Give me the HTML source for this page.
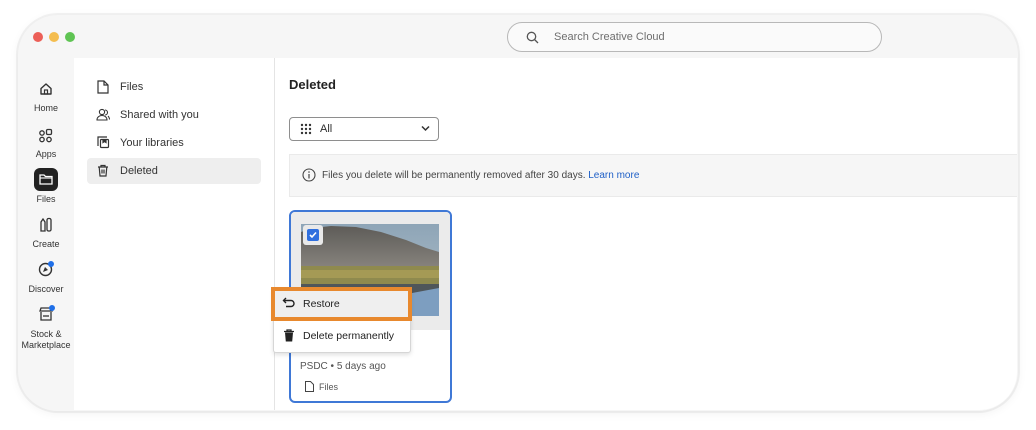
<!DOCTYPE html>
<html><head><meta charset="utf-8"><style>
*{box-sizing:border-box;margin:0;padding:0}
body{width:1036px;height:430px;background:#fff;position:relative;overflow:hidden;font-family:"Liberation Sans",sans-serif;color:#2c2c2c}
.win{position:absolute;left:18px;top:15px;width:1000px;height:396px;background:#f6f6f6;border-radius:40px;box-shadow:0 2px 10px rgba(0,0,0,.06),0 0 0 2px #f3f3f3}
.content{position:absolute;left:74px;top:58px;width:943px;height:352px;background:#fff;border-bottom-right-radius:38px;overflow:hidden}
.dot{position:absolute;top:32px;width:10px;height:10px;border-radius:50%}
.search{position:absolute;left:507px;top:22px;width:375px;height:30px;border:1.5px solid #b8b8b8;border-radius:15px;background:#fafafa;font-size:11px;color:#6e6e6e;padding:8px 0 0 46px}
.nav{position:absolute;left:18px;width:56px;text-align:center;font-size:9px;color:#333}
.side{position:absolute;font-size:11px;color:#333}
.abs{position:absolute}
</style></head><body>
<div class="win"></div>
<div class="dot" style="left:33px;background:#ec5f57"></div>
<div class="dot" style="left:49px;background:#f4bd4f"></div>
<div class="dot" style="left:65px;background:#5fc453"></div>
<div class="search"><svg class="abs" style="left:18px;top:8px" width="13" height="13" viewBox="0 0 13 13"><circle cx="5.5" cy="5.5" r="4.2" fill="none" stroke="#555" stroke-width="1.3"/><path d="M8.5 8.5L12 12" stroke="#555" stroke-width="1.3"/></svg>Search Creative Cloud</div>
<div class="content"></div>
<div class="abs" style="left:274px;top:58px;width:1px;height:352px;background:#e4e4e4"></div>

<svg class="abs" style="left:39px;top:82px" width="14" height="14" viewBox="0 0 14 14"><path d="M2 6.5L7 2l5 4.5V12H2z" fill="none" stroke="#333" stroke-width="1.4" stroke-linejoin="round"/><rect x="5.5" y="8" width="3" height="4" fill="none" stroke="#333" stroke-width="1.2"/></svg>
<div class="nav" style="top:103px">Home</div>
<svg class="abs" style="left:38px;top:128px" width="16" height="16" viewBox="0 0 16 16" fill="none" stroke="#333" stroke-width="1.3"><circle cx="4" cy="5" r="2.2"/><rect x="8.5" y="1.5" width="5" height="5" rx="1.2"/><circle cx="4" cy="11.5" r="2.2"/><circle cx="11" cy="11.5" r="2.2"/></svg>
<div class="nav" style="top:149px">Apps</div>
<div class="abs" style="left:34px;top:168px;width:24px;height:23px;background:#222;border-radius:6px"></div>
<svg class="abs" style="left:39px;top:173px" width="14" height="13" viewBox="0 0 14 13"><path d="M1 2h4l1.5 1.5H13V11H1z" fill="none" stroke="#fff" stroke-width="1.3"/><path d="M1 5h12" stroke="#fff" stroke-width="1.1"/></svg>
<div class="nav" style="top:194px">Files</div>
<svg class="abs" style="left:39px;top:217px" width="14" height="15" viewBox="0 0 14 15" fill="none" stroke="#333" stroke-width="1.3"><path d="M2 14V5l2-3 2 3v9z"/><rect x="8" y="1.5" width="4" height="12.5" rx="1.5"/></svg>
<div class="nav" style="top:239px">Create</div>
<svg class="abs" style="left:38px;top:261px" width="16" height="16" viewBox="0 0 16 16"><circle cx="7.5" cy="8.5" r="6" fill="none" stroke="#333" stroke-width="1.4"/><path d="M5 11l2-5 3 3z" fill="#333"/><circle cx="13" cy="3" r="3" fill="#1f6fe8"/></svg>
<div class="nav" style="top:284px">Discover</div>
<svg class="abs" style="left:38px;top:305px" width="17" height="17" viewBox="0 0 17 17" fill="none" stroke="#333" stroke-width="1.3"><path d="M2 6h12l-1-3H3z"/><path d="M3 7v8h10V7"/><path d="M5 11h6"/><circle cx="14" cy="3" r="3" fill="#1f6fe8" stroke="none"/></svg>
<div class="nav" style="top:329px;line-height:11px">Stock &amp;<br>Marketplace</div>

<div class="abs" style="left:87px;top:158px;width:174px;height:26px;background:#eeeeee;border-radius:4px"></div>
<svg class="abs" style="left:97px;top:80px" width="12" height="14" viewBox="0 0 12 14" fill="none" stroke="#333" stroke-width="1.2"><path d="M1 1h6l4 4v8H1z"/><path d="M7 1v4h4"/></svg>
<div class="side" style="left:120px;top:81px">Files</div>
<svg class="abs" style="left:96px;top:108px" width="14" height="13" viewBox="0 0 14 13" fill="none" stroke="#333" stroke-width="1.1"><circle cx="6" cy="4" r="2.6"/><path d="M1 12c0-3 2.5-4.5 5-4.5s5 1.5 5 4.5z"/><path d="M9 2a2.5 2.5 0 010 5M12 8c1 1 1.5 2 1.5 3.5"/></svg>
<div class="side" style="left:120px;top:109px">Shared with you</div>
<svg class="abs" style="left:97px;top:136px" width="13" height="13" viewBox="0 0 13 13" fill="none" stroke="#333" stroke-width="1.2"><path d="M1 10V1h9"/><rect x="3.5" y="3.5" width="8" height="8" rx="1"/><path d="M6 3.5v3l1.5-1 1.5 1v-3" fill="#333"/></svg>
<div class="side" style="left:120px;top:137px">Your libraries</div>
<svg class="abs" style="left:97px;top:164px" width="12" height="13" viewBox="0 0 12 13" fill="none" stroke="#333" stroke-width="1.2"><path d="M1 3h10M4 3V1.5h4V3M2.2 3l.8 9h6l.8-9M5 5.5v4M7 5.5v4"/></svg>
<div class="side" style="left:120px;top:165px">Deleted</div>

<div class="abs" style="left:289px;top:77px;font-size:13px;font-weight:bold;color:#222">Deleted</div>
<div class="abs" style="left:289px;top:117px;width:150px;height:24px;border:1px solid #8e8e8e;border-radius:4px"></div>
<svg class="abs" style="left:300px;top:123px" width="12" height="12" viewBox="0 0 12 12" fill="#333"><circle cx="2" cy="2" r="1.2"/><circle cx="6" cy="2" r="1.2"/><circle cx="10" cy="2" r="1.2"/><circle cx="2" cy="6" r="1.2"/><circle cx="6" cy="6" r="1.2"/><circle cx="10" cy="6" r="1.2"/><circle cx="2" cy="10" r="1.2"/><circle cx="6" cy="10" r="1.2"/><circle cx="10" cy="10" r="1.2"/></svg>
<div class="abs" style="left:320px;top:123px;font-size:11px">All</div>
<svg class="abs" style="left:421px;top:125px" width="9" height="7" viewBox="0 0 9 7"><path d="M1 1.5l3.5 3.5L8 1.5" fill="none" stroke="#333" stroke-width="1.5"/></svg>
<div class="abs" style="left:289px;top:154px;width:728px;height:43px;background:#f6f6f6;border:1px solid #eaeaea;border-right:none"></div>
<svg class="abs" style="left:302px;top:168px" width="14" height="14" viewBox="0 0 14 14"><circle cx="7" cy="7" r="6" fill="none" stroke="#444" stroke-width="1.1"/><rect x="6.4" y="6" width="1.2" height="4.5" fill="#444"/><circle cx="7" cy="4" r=".8" fill="#444"/></svg>
<div class="abs" style="left:322px;top:170px;font-size:10px;color:#444">Files you delete will be permanently removed after 30 days. <span style="color:#1e5fc7">Learn more</span></div>

<div class="abs" style="left:289px;top:210px;width:163px;height:193px;border:2px solid #3f78d6;border-radius:6px;background:#fff;overflow:hidden">
 <div style="position:absolute;left:0;top:0;width:159px;height:118px;background:#ebebeb"></div>
</div>
<svg class="abs" style="left:301px;top:224px" width="138" height="92" viewBox="0 0 138 92" preserveAspectRatio="none">
 <defs><linearGradient id="sky" x1="0" y1="0" x2="0" y2="1"><stop offset="0" stop-color="#8ea5b7"/><stop offset="1" stop-color="#b5c2cb"/></linearGradient>
 <linearGradient id="mt" x1="0" y1="0" x2="0" y2="1"><stop offset="0" stop-color="#5e5c58"/><stop offset="1" stop-color="#8d8983"/></linearGradient></defs>
 <rect width="138" height="92" fill="url(#sky)"/>
 <path d="M0 8L12 4 30 2 55 3 80 8 105 16 125 24 138 28V50H0z" fill="url(#mt)"/>
 <rect y="42" width="138" height="20" fill="#8f8a4e"/>
 <rect y="46" width="138" height="8" fill="#a59a55"/>
 <rect y="60" width="138" height="32" fill="#4f565a"/>
 <path d="M95 72L138 64V92H85z" fill="#7d9ec0"/>
</svg>
<div class="abs" style="left:303px;top:225px;width:20px;height:20px;background:#e9e9e9;border-radius:3px"></div>
<div class="abs" style="left:307px;top:229px;width:12px;height:12px;background:#2f6fde;border-radius:2px"></div>
<svg class="abs" style="left:308px;top:230px" width="10" height="10" viewBox="0 0 10 10"><path d="M2 5l2 2 4-4.5" fill="none" stroke="#fff" stroke-width="1.6"/></svg>
<div class="abs" style="left:300px;top:361px;font-size:10px;color:#555">PSDC • 5 days ago</div>
<svg class="abs" style="left:305px;top:381px" width="9" height="11" viewBox="0 0 9 11" fill="none" stroke="#444" stroke-width="1"><path d="M.5.5h5l3 3v7H.5z"/></svg>
<div class="abs" style="left:319px;top:382px;font-size:9px;color:#555">Files</div>

<div class="abs" style="left:273px;top:288px;width:138px;height:65px;background:#fff;border:1px solid #d6d6d6;border-radius:3px;box-shadow:0 2px 4px rgba(0,0,0,.12)"></div>
<div class="abs" style="left:271px;top:287px;width:141px;height:34px;border:4px solid #e8892e;background:#efefef"></div>
<svg class="abs" style="left:282px;top:297px" width="13" height="11" viewBox="0 0 13 11" fill="none" stroke="#222" stroke-width="1.4"><path d="M4 1L1.5 3.5 4 6"/><path d="M1.5 3.5H9a3 3 0 010 6H4"/></svg>
<div class="abs" style="left:303px;top:298px;font-size:10.5px;color:#222">Restore</div>
<svg class="abs" style="left:283px;top:329px" width="12" height="13" viewBox="0 0 12 13"><path d="M1 2.5h10M4 2.5V1h4v1.5" fill="none" stroke="#222" stroke-width="1.3"/><path d="M2 3.5h8l-.8 9H2.8z" fill="#222"/></svg>
<div class="abs" style="left:303px;top:330px;font-size:10.5px;color:#222">Delete permanently</div>
</body></html>
